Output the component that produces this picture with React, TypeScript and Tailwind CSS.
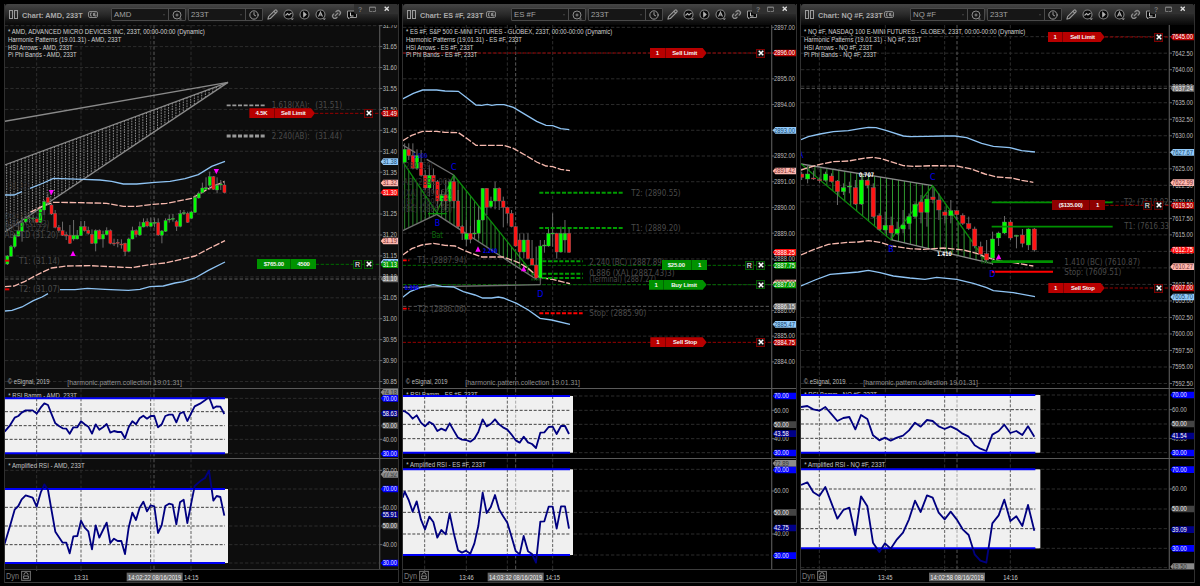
import { Pencil, Link2, Clock } from 'lucide-react';
import type { CSSProperties } from 'react';

// Plot coordinates are thirds of a CSS pixel. y = 0 of the price pane sits 165px below its top.
type Pt = [number, number];
type Candle = [number, number, number, number, number]; // high, low, top, bottom, up
type Seg = { p: Pt[]; c: string; w?: number; dash?: string };
type Label = { x: number; y: number; t: string; w?: number; c?: string; bold?: boolean; s?: number };
type Tag = { y: number; t: string; k: string };
type Order = { x: number; split: number; end: number; y: number; a: string; b: string; k: 'red' | 'green' | 'dark'; arrow?: boolean; from: number; r?: boolean };
type Study = { title: string; titleW: number; titleY: number; top: number; bottom: number; grid: number[]; pts: string; tags: Tag[] };

type Chart = {
  symbol: string;
  x0: number;
  leftW: string;
  titleW: number;
  bg: string;
  axis: number;
  labelX: number;
  legend: [string, number][];
  gridX: number[];
  cross: Pt;
  prices: Tag[];
  tags: Tag[];
  start: number;
  step: number;
  candles: Candle[];
  bands: Seg[];
  hatch: { top: Pt[]; bottom: Pt[]; step: number; c: string; dash?: string };
  under: Seg[];
  over: Seg[];
  labels: Label[];
  arrows: [number, number, number][];
  orders: Order[];
  xBox: number;
  plotEnd: number;
  studies: Study[];
  times: [number, string][];
  stamp: [number, string];
};

const BLUE = '#8fc4f4';
const PINK = '#f7b9ae';
const GREEN = '#0a8c0a';
const GRAY = '#707070';

const TAG_COLORS: Record<string, [string, string]> = {
  sky: ['#93caf9', '#17486f'],
  pink: ['#ffb9b0', '#7a3030'],
  red: ['#ff0d0d', '#ffffff'],
  order: ['#b80000', '#ffffff'],
  green: ['#009a00', '#ffffff'],
  gray: ['#707070', '#f0f0f0'],
  mid: ['#444444', '#eeeeee'],
  dim: ['#8a8a8a', '#333333'],
  blue: ['#0000ff', '#e8e8ff'],
  navy: ['#000088', '#ffffff'],
};

const P = (s: string): Pt[] => s.split(' ').map((q) => q.split(',').map(Number) as Pt);

const up = (s: string): Pt[] => P(s).map(([x, y]) => [x, y - 570]);

const scale = (first: number, y: number, dy: number, dv: number, n: number): Tag[] =>
  Array.from({ length: n }, (_, i) => ({ y: y + dy * i, t: (first + dv * i).toFixed(2), k: '' }));

const CHARTS: Chart[] = [
  {
    symbol: 'AMD',
    x0: 15,
    leftW: 'w-[106px]',
    titleW: 184,
    bg: '#0d0d0d',
    axis: 1139,
    labelX: 1148,
    legend: [
      ['* AMD, ADVANCED MICRO DEVICES INC, 233T, 00:00-00:00 (Dynamic)', 590],
      ['Harmonic Patterns (19.01.31) - AMD, 233T', 340],
      ['HSI Arrows - AMD, 233T', 194],
      ['Pi Phi Bands - AMD, 233T', 206],
    ],
    gridX: [110, 243, 452, 573],
    cross: [462, 267],
    prices: scale(31.7, -493, 62.8, -0.05, 18),
    tags: [
      { y: -230, t: '31.49', k: 'order' },
      { y: -85, t: '31.38', k: 'sky' },
      { y: -21, t: '31.32', k: 'pink' },
      { y: 7, t: '31.30', k: 'red' },
      { y: 153, t: '31.19', k: 'pink' },
      { y: 217, t: '31.13', k: 'sky' },
      { y: 224, t: '31.13', k: 'green' },
      { y: 267, t: '31.10', k: 'gray' },
    ],
    start: 22,
    step: 11.04,
    candles: [
      [195, 225, 198, 222, 1], [165, 200, 170, 199, 1], [130, 175, 136, 170, 1], [100, 140, 122, 138, 1], [80, 155, 98, 124, 1],
      [80, 100, 86, 96, 1], [75, 98, 83, 86, 1], [75, 98, 84, 87, 1], [80, 98, 85, 97, 0], [55, 98, 58, 97, 1],
      [30, 75, 35, 60, 1], [12, 45, 22, 38, 0], [40, 75, 45, 72, 0], [60, 115, 70, 112, 0], [105, 128, 112, 122, 0],
      [95, 138, 122, 136, 0], [125, 150, 134, 138, 0], [105, 162, 136, 160, 0], [90, 152, 136, 147, 1], [120, 148, 136, 147, 1],
      [93, 138, 110, 137, 1], [93, 125, 110, 122, 0], [110, 134, 121, 130, 0], [118, 162, 133, 160, 0], [118, 184, 122, 160, 1],
      [118, 148, 122, 147, 0], [122, 173, 133, 147, 1], [112, 136, 122, 134, 1], [118, 163, 122, 160, 0], [146, 168, 159, 162, 0],
      [147, 172, 157, 160, 0], [148, 176, 162, 165, 0], [158, 198, 160, 185, 0], [143, 187, 147, 184, 1], [110, 148, 122, 147, 1],
      [118, 142, 122, 134, 0], [95, 138, 110, 135, 1], [85, 112, 97, 111, 1], [85, 112, 95, 108, 0], [83, 112, 98, 109, 1],
      [85, 112, 97, 100, 1], [85, 138, 98, 135, 0], [120, 160, 123, 136, 1], [85, 126, 92, 124, 1], [73, 98, 87, 90, 1],
      [72, 95, 85, 88, 1], [90, 123, 95, 109, 0], [60, 112, 71, 109, 1], [60, 75, 68, 71, 1], [65, 99, 70, 97, 0],
      [62, 87, 66, 85, 1], [14, 69, 22, 67, 1], [5, 26, 10, 24, 1], [-22, 10, -6, 8, 1], [-38, 0, -7, -2, 1],
      [-55, 0, -40, -14, 1], [-42, 0, -40, -2, 0], [-38, 10, -14, 0, 1], [-30, 0, -18, -15, 1], [-28, 10, -15, 8, 0],
    ],
    bands: [
      { p: up('14,585 42,585 66,575'), c: BLUE },
      { p: up('90,565 130,549 160,535 250,538 300,540 335,544 370,552 410,552 465,547 510,544 555,536 595,524 635,499 675,484'), c: BLUE },
      { p: P('90,67 125,50 160,37 240,38 320,40 370,49 410,49 460,43 500,40 540,32 575,25 605,8 640,-12 673,-25'), c: PINK, dash: '20 5' },
      { p: P('14,290 42,288 75,274 120,250 155,234 200,228 270,227 330,230 395,233 455,223 495,219 540,209 585,198 630,174 675,152'), c: PINK, dash: '20 5' },
      { p: P('14,363 36,361 66,351 100,332 126,321 144,311'), c: BLUE },
      { p: P('180,299 225,299 262,295 315,298 385,301 420,298 450,290 490,288 525,279 550,275 585,264 625,241 675,216'), c: BLUE },
    ],
    hatch: { top: P('14,-75 684,-323'), bottom: P('14,126 684,-323'), step: 11.04, c: '#8a8a8a', dash: '5 3' },
    under: [
      { p: P('14,-206 684,-323'), c: '#8a8a8a' },
      { p: P('14,-75 684,-323'), c: '#8a8a8a' },
      { p: P('14,126 684,-323'), c: '#8a8a8a' },
    ],
    over: [
      { p: P('680,-254 797,-254'), c: '#999999', w: 5, dash: '12 5' },
      { p: P('680,-162 797,-162'), c: '#999999', w: 9, dash: '12 5' },
      { p: P('14,212 28,212'), c: '#dd0000', w: 6 },
      { p: P('14,298 28,298'), c: '#dd0000', w: 6 },
    ],
    labels: [
      { x: 815, y: -245, t: '1.618(XA):', w: 114 },
      { x: 946, y: -245, t: '(31.51)', w: 80 },
      { x: 815, y: -154, t: '2.240(AB):', w: 114 },
      { x: 946, y: -154, t: '(31.44)', w: 80 },
      { x: 20, y: -3, t: '(31.32)', w: 68, c: '#303030' },
      { x: 14, y: 88, t: '(XA) (31.27)', w: 122, c: '#333333' },
      { x: 14, y: 111, t: '0.886 (31.23)', w: 134, c: '#404040' },
      { x: 14, y: 122, t: '(BC) (31.22)', w: 132, c: '#3c3c3c' },
      { x: 14, y: 144, t: 'AB=CD (31.20)', w: 161 },
      { x: 57, y: 221, t: 'T1: (31.14)', w: 123 },
      { x: 57, y: 307, t: 'T2: (31.07)', w: 123 },
    ],
    arrows: [[154, 7, 0], [219, 191, 1], [649, -56, 0]],
    orders: [
      { x: 748, split: 824, end: 945, y: -230, a: '4.5K', b: 'Sell Limit', k: 'red', arrow: true, from: 945 },
      { x: 772, split: 874, end: 947, y: 223, a: '$765.00', b: '4500', k: 'green', from: 947, r: true },
    ],
    xBox: 1093,
    plotEnd: 675,
    studies: [
      {
        title: '* RSI Bamm - AMD, 233T', titleW: 206, titleY: 35, top: 37, bottom: 202, grid: [77, 119, 160],
        pts: '14,137 30,118 44,95 55,90 65,80 77,73 98,73 110,83 122,65 133,52 144,57 155,85 166,112 177,120 188,127 199,128 209,143 220,124 232,124 243,106 254,115 265,122 276,143 287,115 298,131 309,124 320,114 331,140 342,135 353,138 364,138 375,157 386,124 397,106 408,115 419,97 430,89 441,98 452,90 463,90 474,124 485,115 496,90 507,86 518,86 529,109 540,82 551,78 562,105 573,83 584,61 600,53 615,43 627,33 640,67 650,61 661,62 673,84',
        tags: [{ y: 19, t: '74.18', k: 'dim' }, { y: 160, t: '40.00', k: '' }, { y: 119, t: '50.00', k: 'mid' }, { y: 82, t: '58.63', k: 'navy' }, { y: 37, t: '70.00', k: 'blue' }, { y: 203, t: '30.00', k: 'blue' }],
      },
      {
        title: '* Amplified RSI - AMD, 233T', titleW: 229, titleY: 245, top: 309, bottom: 531, grid: [253, 364, 420, 476],
        pts: '14,473 30,420 44,371 55,360 65,340 77,328 98,335 110,362 122,320 133,295 144,312 155,375 166,437 188,470 199,470 209,502 220,451 232,450 243,404 254,425 265,436 276,490 287,418 298,455 309,432 320,410 331,471 342,458 353,465 364,465 375,504 386,425 397,380 408,402 419,365 430,347 441,376 452,358 463,361 474,441 485,418 496,360 507,353 518,356 529,415 540,349 551,341 562,411 573,355 584,300 600,286 615,276 627,254 640,344 650,330 661,333 673,389',
        tags: [{ y: 265, t: '77.92', k: 'dim' }, { y: 253, t: '80.00', k: '' }, { y: 364, t: '60.00', k: '' }, { y: 476, t: '40.00', k: '' }, { y: 420, t: '50.00', k: 'mid' }, { y: 386, t: '55.91', k: 'navy' }, { y: 309, t: '70.00', k: 'blue' }, { y: 531, t: '30.00', k: 'blue' }],
      },
    ],
    times: [[243, '13:31'], [573, '14:15']],
    stamp: [380, '14:02:22 08/16/2019'],
  },
  {
    symbol: 'ES #F',
    x0: 9,
    leftW: 'w-[108px]',
    titleW: 192,
    bg: '#000000',
    axis: 1115,
    labelX: 1122,
    legend: [
      ['* ES #F, S&P 500 E-MINI FUTURES - GLOBEX, 233T, 00:00-00:00 (Dynamic)', 619],
      ['Harmonic Patterns (19.01.31) - ES #F, 233T', 348],
      ['HSI Arrows - ES #F, 233T', 202],
      ['Pi Phi Bands - ES #F, 233T', 214],
    ],
    gridX: [74, 199, 322, 458],
    cross: [347, 349],
    prices: scale(2897, -488, 77.2, -1, 14),
    tags: [
      { y: -411, t: '2896.00', k: 'order' },
      { y: -179, t: '2893.00', k: 'sky' },
      { y: -57, t: '2891.42', k: 'pink' },
      { y: 187, t: '2888.25', k: 'red' },
      { y: 226, t: '2887.75', k: 'green' },
      { y: 279, t: '2887.08', k: 'pink' },
      { y: 285, t: '2887.00', k: 'green' },
      { y: 349, t: '2886.15', k: 'gray' },
      { y: 403, t: '2885.47', k: 'sky' },
      { y: 457, t: '2884.75', k: 'order' },
    ],
    start: 14,
    step: 12.33,
    candles: [
      [-140, -80, -122, -83, 1], [-140, -90, -122, -103, 0], [-140, -62, -103, -65, 0], [-122, -60, -103, -65, 1], [-120, -40, -83, -44, 0],
      [-60, 0, -44, -6, 0], [-75, 20, -44, -6, 1], [-65, 10, -44, -25, 0], [-30, 55, -25, 33, 0], [0, 50, 14, 33, 1],
      [-30, 60, 14, 33, 0], [-32, 36, -25, 33, 1], [-45, 55, -25, 33, 0], [0, 115, 33, 110, 0], [105, 150, 110, 130, 0],
      [90, 168, 130, 148, 1], [108, 160, 130, 148, 0], [90, 148, 129, 132, 1], [50, 145, 90, 130, 1], [-6, 92, -5, 90, 1],
      [-6, 75, -5, 52, 0], [20, 55, 33, 50, 1], [-25, 58, -5, 33, 1], [-8, 60, -5, 33, 0], [20, 112, 33, 52, 0],
      [50, 100, 52, 70, 0], [60, 112, 70, 110, 0], [108, 170, 110, 168, 0], [130, 205, 150, 186, 0], [130, 205, 150, 186, 1],
      [130, 208, 150, 206, 0], [150, 226, 206, 225, 0], [170, 268, 225, 264, 0], [150, 284, 168, 264, 1], [150, 188, 165, 168, 1],
      [112, 170, 130, 168, 1], [70, 170, 129, 132, 1], [128, 206, 130, 186, 0], [110, 188, 130, 186, 1], [90, 188, 130, 150, 1],
      [112, 188, 130, 187, 0],
    ],
    bands: [
      { p: up('8,297 40,280 68,270 110,270 135,273 175,274 200,293 228,315 245,316 262,313 275,316 290,314 312,314 340,322 375,343 410,364 438,376 458,377 482,386 508,389'), c: BLUE },
      { p: up('8,422 35,406 68,394 110,394 135,397 175,398 200,415 228,436 312,436 340,445 375,465 410,486 438,498 458,500 482,508 510,512'), c: PINK, dash: '20 5' },
      { p: P('8,195 35,176 65,165 100,160 135,166 165,168 190,180 220,192 245,201 310,201 335,210 360,220 385,236 405,252 421,263 458,268 485,275 510,281'), c: PINK, dash: '20 5' },
      { p: P('8,322 30,305 60,293 100,284 125,289 160,291 190,305 225,315 248,324 275,324 295,321 310,324 350,340 385,360 420,385 455,390 510,403'), c: BLUE },
    ],
    hatch: { top: P('8,-85 110,67 161,-45 408,262'), bottom: P('8,122 110,73 408,268'), step: 12.33, c: '#2a862a' },
    under: [
      { p: P('8,-135 46,-112'), c: GRAY },
      { p: P('80,-92 161,-45'), c: GRAY },
      { p: P('8,122 110,73 412,270'), c: GRAY },
      { p: P('8,292 421,284'), c: GRAY },
      { p: P('8,-85 110,67 161,-45 408,262'), c: GREEN, w: 4 },
      { p: P('84,71 140,71'), c: GREEN, w: 4 },
      { p: P('394,268 424,268'), c: '#0a5a0a', w: 7, dash: '4 3' },
    ],
    over: [
      { p: P('418,8 672,8'), c: '#009c00', w: 6, dash: '12 5' },
      { p: P('418,114 672,114'), c: '#009c00', w: 6, dash: '12 5' },
      { p: P('427,214 548,214'), c: '#009c00', w: 6, dash: '12 5' },
      { p: P('427,251 548,251'), c: '#009c00', w: 6, dash: '12 5' },
      { p: P('427,264 548,264'), c: '#009c00', w: 6, dash: '12 5' },
      { p: P('418,370 548,370'), c: '#ff0000', w: 6, dash: '12 5' },
      { p: P('8,211 28,211'), c: '#ff0000', w: 5, dash: '12 5' },
      { p: P('8,356 28,356'), c: '#ff0000', w: 5, dash: '12 5' },
    ],
    labels: [
      { x: 10, y: -62, t: '(2891.59)', w: 88, c: '#333333' },
      { x: 10, y: -15, t: 'AB (2891.00)', w: 140, c: '#333333' },
      { x: 10, y: 19, t: '(XA) (2890.56)', w: 146, c: '#3a3a3a' },
      { x: 10, y: 46, t: '(BC) (2890.12)', w: 146, c: '#333333' },
      { x: 10, y: 65, t: '(BC) (2889.95)', w: 146, c: '#3a3a3a' },
      { x: 694, y: 19, t: 'T2: (2890.55)', w: 148 },
      { x: 694, y: 124, t: 'T1: (2889.20)', w: 148 },
      { x: 52, y: 219, t: 'T1: (2887.94)', w: 147 },
      { x: 52, y: 366, t: 'T2: (2886.06)', w: 147 },
      { x: 568, y: 277, t: '(Terminal) (2887.27)', w: 200 },
      { x: 568, y: 224, t: '2.240 (BC) (2887.89)', w: 226 },
      { x: 568, y: 259, t: '0.886 (XA) (2887.43)3)', w: 256 },
      { x: 568, y: 378, t: 'Stop: (2885.90)', w: 171 },
      { x: 153, y: -60, t: 'C', c: '#0000f0' },
      { x: 104, y: 108, t: 'B', c: '#0000f0' },
      { x: 412, y: 321, t: 'D', c: '#0000f0' },
      { x: 95, y: 145, t: 'Bat', c: '#0a6a0a', w: 34 },
      { x: 40, y: -96, t: '1.000', c: '#0000f0', w: 42, s: 19 },
      { x: 249, y: 188, t: '2.240', c: '#0000f0', w: 43, s: 19, bold: true },
      { x: 14, y: 299, t: '0.886', c: '#0000f0', w: 43, s: 19, bold: true },
    ],
    arrows: [[234, 178, 1], [371, 237, 1]],
    orders: [
      { x: 750, split: 797, end: 920, y: -411, a: '1', b: 'Sell Limit', k: 'red', arrow: true, from: 8 },
      { x: 785, split: 876, end: 922, y: 226, a: '$25.00', b: '1', k: 'green', from: 8, r: true },
      { x: 747, split: 793, end: 920, y: 284, a: '1', b: 'Buy Limit', k: 'green', arrow: true, from: 8 },
      { x: 751, split: 799, end: 920, y: 457, a: '1', b: 'Sell Stop', k: 'red', arrow: true, from: 8 },
    ],
    xBox: 1068,
    plotEnd: 510,
    studies: [
      {
        title: '* RSI Bamm - ES #F, 233T', titleW: 214, titleY: 34, top: 30, bottom: 200, grid: [73, 115, 158],
        pts: '8,75 14,76 26,84 38,98 50,88 63,110 75,121 88,108 100,115 112,135 124,128 137,134 149,112 161,133 174,155 186,161 198,162 211,167 223,158 235,138 248,100 260,121 272,114 285,100 297,115 309,124 322,131 334,145 347,163 359,170 371,152 384,169 396,174 408,186 421,140 433,139 446,123 458,122 470,144 483,120 495,120 507,144',
        tags: [{ y: 73, t: '60.00', k: '' }, { y: 158, t: '40.00', k: '' }, { y: 116, t: '50.00', k: 'mid' }, { y: 143, t: '43.58', k: 'navy' }, { y: 30, t: '70.00', k: 'blue' }, { y: 201, t: '30.00', k: 'blue' }],
      },
      {
        title: '* Amplified RSI - ES #F, 233T', titleW: 238, titleY: 243, top: 250, bottom: 507, grid: [315, 379, 444],
        pts: '8,335 14,317 26,342 38,377 50,346 63,401 75,430 88,392 100,408 112,455 124,432 137,445 149,382 161,440 174,493 186,500 198,494 211,503 223,473 235,420 248,320 260,381 272,364 285,327 297,370 309,390 322,410 334,450 347,495 359,505 371,450 384,496 396,504 408,530 421,407 433,406 446,362 458,362 470,428 483,361 495,361 507,428',
        tags: [{ y: 232, t: '72.89', k: 'dim' }, { y: 315, t: '60.00', k: '' }, { y: 444, t: '40.00', k: '' }, { y: 379, t: '50.00', k: 'mid' }, { y: 426, t: '42.75', k: 'navy' }, { y: 252, t: '70.00', k: 'blue' }, { y: 509, t: '30.00', k: 'blue' }],
      },
    ],
    times: [[199, '13:46'], [458, '14:15']],
    stamp: [263, '14:03:32 08/16/2019'],
  },
  {
    symbol: 'NQ #F',
    x0: 3,
    leftW: 'w-[109px]',
    titleW: 196,
    bg: '#000000',
    axis: 1108,
    labelX: 1116,
    legend: [
      ['* NQ #F, NASDAQ 100 E-MINI FUTURES - GLOBEX, 233T, 00:00-00:00 (Dynamic)', 664],
      ['Harmonic Patterns (19.01.31) - NQ #F, 233T', 352],
      ['HSI Arrows - NQ #F, 233T', 206],
      ['Pi Phi Bands - NQ #F, 233T', 218],
    ],
    gridX: [58, 256, 434, 631],
    cross: [471, -305],
    prices: scale(7645, -460, 49.55, -2.5, 22),
    tags: [
      { y: -459, t: '7645.00', k: 'order' },
      { y: -305, t: '7637.24', k: 'gray' },
      { y: -113, t: '7627.67', k: 'sky' },
      { y: -22, t: '7622.99', k: 'pink' },
      { y: 46, t: '7619.50', k: 'order' },
      { y: 180, t: '7612.75', k: 'red' },
      { y: 230, t: '7610.27', k: 'pink' },
      { y: 294, t: '7607.00', k: 'order' },
      { y: 321, t: '7605.70', k: 'sky' },
    ],
    start: 5,
    step: 17.9,
    candles: [
      [-55, -30, -48, -38, 0], [-75, -20, -48, -33, 1], [-58, -30, -36, -33, 0], [-38, -20, -31, -28, 0], [-55, -25, -48, -29, 1],
      [-50, -22, -42, -25, 0], [-30, 45, -27, 5, 0], [-20, 15, -7, 5, 1], [-25, 10, -12, -9, 1], [-30, 45, -7, 42, 0],
      [-40, 45, -30, 42, 1], [-32, -5, -29, -14, 0], [-20, 84, -7, 80, 0], [70, 122, 77, 118, 0], [65, 130, 106, 120, 1],
      [80, 145, 106, 129, 0], [95, 135, 117, 130, 1], [60, 130, 105, 117, 1], [70, 118, 80, 101, 1], [38, 85, 43, 80, 1],
      [15, 100, 36, 67, 0], [15, 110, 27, 67, 1], [-10, 40, 21, 29, 0], [10, 90, 30, 60, 0], [60, 100, 66, 76, 0],
      [30, 100, 62, 77, 1], [60, 90, 62, 74, 0], [70, 105, 76, 100, 0], [80, 120, 101, 116, 0], [110, 175, 117, 168, 0],
      [155, 200, 170, 193, 0], [150, 215, 191, 210, 0], [125, 225, 147, 204, 1], [125, 168, 129, 144, 1], [78, 132, 96, 129, 1],
      [90, 150, 96, 144, 0], [135, 175, 136, 139, 1], [117, 172, 135, 160, 0], [115, 180, 117, 165, 1], [114, 185, 117, 180, 0],
    ],
    bands: [
      { p: up('3,419 25,410 60,402 100,395 145,392 180,386 205,382 228,383 260,392 310,408 330,410 380,409 430,408 465,408 500,413 545,430 580,439 630,443 665,452 705,456'), c: BLUE },
      { p: up('3,510 25,503 60,493 100,485 145,483 190,475 218,472 245,476 310,497 340,499 400,497 470,498 510,506 555,522 590,531 635,534 665,541 700,547'), c: PINK, dash: '20 5' },
      { p: P('3,195 45,177 85,163 145,157 175,156 205,152 240,157 275,168 330,176 370,178 430,174 490,180 530,190 560,202 600,213 640,218 700,228'), c: PINK, dash: '20 5' },
      { p: P('3,288 45,270 90,253 140,249 175,246 205,241 240,248 280,258 330,264 375,268 410,262 470,268 520,280 560,293 580,302 640,308 705,320'), c: BLUE },
    ],
    hatch: { top: P('3,-78 398,-13 559,215'), bottom: P('3,-78 272,149 559,217'), step: 17.9, c: '#2f9a2f' },
    under: [
      { p: P('3,-78 398,-13'), c: '#888888' },
      { p: P('272,149 577,221'), c: '#888888' },
      { p: P('3,-78 272,149 398,-13 559,215'), c: GREEN, w: 4 },
      { p: P('544,217 578,217'), c: '#0a5a0a', w: 7, dash: '4 3' },
    ],
    over: [
      { p: P('575,37 938,37'), c: '#009000', w: 5 },
      { p: P('575,110 938,110'), c: '#009000', w: 5 },
      { p: P('575,215 759,215'), c: '#009000', w: 8 },
      { p: P('575,245 759,245'), c: '#ff0000', w: 6 },
    ],
    labels: [
      { x: 972, y: 46, t: 'T2: (7618.92', w: 134 },
      { x: 973, y: 118, t: 'T1: (7616.33', w: 134 },
      { x: 793, y: 226, t: '1.410 (BC) (7610.87)', w: 227 },
      { x: 793, y: 254, t: 'Stop: (7609.51)', w: 171 },
      { x: -6, y: -97, t: 'A', c: '#0000f0' },
      { x: 390, y: -30, t: 'C', c: '#0000f0' },
      { x: 265, y: 187, t: 'B', c: '#0000f0' },
      { x: 568, y: 262, t: 'D', c: '#0000f0' },
      { x: 177, y: -38, t: '0.707', c: '#ffffff', w: 45, s: 19, bold: true },
      { x: 411, y: 197, t: '1.410', c: '#ffffff', w: 44, s: 19, bold: true },
    ],
    arrows: [[596, 201, 1]],
    orders: [
      { x: 743, split: 790, end: 914, y: -459, a: '1', b: 'Sell Limit', k: 'red', arrow: true, from: 914 },
      { x: 757, split: 870, end: 916, y: 46, a: '($135.00)', b: '1', k: 'dark', from: 916, r: true },
      { x: 745, split: 792, end: 914, y: 294, a: '1', b: 'Sell Stop', k: 'red', arrow: true, from: 914 },
    ],
    xBox: 1062,
    plotEnd: 706,
    studies: [
      {
        title: '* RSI Bamm - NQ #F, 233T', titleW: 218, titleY: 32, top: 27, bottom: 200, grid: [71, 114, 157],
        pts: '3,63 22,60 40,70 58,74 76,63 95,85 112,105 130,96 148,93 166,130 183,87 202,99 219,148 238,163 255,155 272,164 291,155 309,149 327,133 345,110 362,122 381,102 398,105 416,121 434,129 452,121 470,130 488,143 506,152 524,178 541,188 559,195 577,146 596,135 613,116 631,141 649,135 667,147 684,121 703,152',
        tags: [{ y: 71, t: '60.00', k: '' }, { y: 158, t: '40.00', k: '' }, { y: 114, t: '50.00', k: 'mid' }, { y: 150, t: '41.54', k: 'navy' }, { y: 27, t: '70.00', k: 'blue' }, { y: 201, t: '30.00', k: 'blue' }],
      },
      {
        title: '* Amplified RSI - NQ #F, 233T', titleW: 243, titleY: 243, top: 250, bottom: 487, grid: [309, 369, 428, 545],
        pts: '3,297 22,289 40,319 58,330 76,303 95,353 112,398 130,372 148,365 166,447 183,331 202,361 219,470 238,498 255,472 272,488 291,460 309,440 327,400 345,344 362,378 381,328 398,335 416,380 434,400 452,377 470,400 488,430 506,447 524,505 541,524 559,530 577,412 596,388 613,341 631,405 649,391 667,420 684,357 703,434',
        tags: [{ y: 309, t: '60.00', k: '' }, { y: 369, t: '50.00', k: 'mid' }, { y: 431, t: '39.09', k: 'navy' }, { y: 251, t: '70.00', k: 'blue' }, { y: 487, t: '30.00', k: 'blue' }, { y: 542, t: '19.50', k: 'dim' }],
      },
    ],
    times: [[255, '13:45'], [631, '14:16']],
    stamp: [387, '14:02:58 08/16/2019'],
  },
];

const W = 1179;

function yAt(line: Pt[], x: number) {
  for (let i = 1; i < line.length; i++) {
    const [x1, y1] = line[i - 1];
    const [x2, y2] = line[i];
    if (x <= x2) return y1 + ((y2 - y1) * (x - x1)) / (x2 - x1);
  }
  return line[line.length - 1][1];
}

function Poly({ s }: { s: Seg }) {
  return (
    <polyline points={s.p.map((q) => q.join(',')).join(' ')} fill="none" stroke={s.c} strokeWidth={s.w ?? 4} strokeDasharray={s.dash} />
  );
}

function Txt({ x, y, w, t, c = '#bdbdbd', s = 20.5 }: { x: number; y: number; w?: number; t: string; c?: string; s?: number }) {
  return (
    <text x={x} y={y} fill={c} fontSize={s} textLength={w} lengthAdjust="spacingAndGlyphs">
      {t}
    </text>
  );
}

function Axis({ chart, prices, tags }: { chart: Chart; prices: Tag[]; tags: Tag[] }) {
  const { axis, labelX, x0, bg } = chart;
  const right = x0 + W;
  return (
    <g>
      <rect x={axis} y={-600} width={right - axis} height={1300} fill={bg} />
      <line x1={axis} x2={axis} y1={-600} y2={700} stroke="#4c4c4c" strokeWidth={4} />
      {[...prices, ...tags].map((p, i) => {
        const col = TAG_COLORS[p.k];
        const w = p.t.length > 5 ? 63 : labelX === 1148 ? 43 : 44;
        return (
          <g key={i}>
            {col ? (
              <path d={`M${axis + 3} ${p.y} l8 -10 H${right} v20 H${axis + 11} z`} fill={col[0]} />
            ) : (
              <line x1={axis} x2={axis + 8} y1={p.y} y2={p.y} stroke="#666" strokeWidth={3} />
            )}
            <Txt x={labelX} y={p.y + 7} w={w} t={p.t} c={col ? col[1] : '#bcbcbc'} />
          </g>
        );
      })}
    </g>
  );
}

function PricePane({ chart }: { chart: Chart }) {
  const { x0, axis, gridX, cross, candles, start, step, hatch } = chart;
  const first = hatch.top[0][0];
  const last = hatch.top[hatch.top.length - 1][0];
  const bars = Array.from({ length: Math.floor((last - first) / hatch.step) }, (_, i) => first + 6 + i * hatch.step).filter((x) => x < last);
  const offset = x0 + 9;
  const body = Math.min(step * 0.84, 13);
  return (
    <div className="relative h-[363px] overflow-hidden">
      <svg className="block h-full w-full" viewBox={`${x0} -495 ${W} 1089`} preserveAspectRatio="none">
        <g stroke="#2c2c2c" strokeWidth={3} strokeDasharray="10 6">
          {gridX.map((x) => <line key={x} x1={x} x2={x} y1={-495} y2={594} />)}
          {chart.prices.map((p) => <line key={p.y} x1={x0} x2={axis} y1={p.y} y2={p.y} />)}
        </g>
        <g stroke="#5a5a5a" strokeWidth={3} strokeDasharray="10 6">
          <line x1={cross[0]} x2={cross[0]} y1={-495} y2={594} />
          <line x1={x0} x2={axis} y1={cross[1]} y2={cross[1]} />
        </g>
        {chart.orders.map((o) => (
          <line key={o.y} x1={o.from} x2={axis + 6} y1={o.y} y2={o.y} stroke={o.k === 'green' ? '#006a00' : '#960000'} strokeWidth={3} strokeDasharray="10 5" />
        ))}
        <g stroke={hatch.c} strokeWidth={3} strokeDasharray={hatch.dash}>
          {bars.map((x) => <line key={x} x1={x} x2={x} y1={yAt(hatch.top, x)} y2={yAt(hatch.bottom, x)} />)}
        </g>
        {chart.under.map((s, i) => <Poly key={i} s={s} />)}
        {chart.bands.map((s, i) => <Poly key={i} s={s} />)}
        {candles.map(([hi, lo, top, bot, isUp], i) => {
          const x = start + i * step;
          return (
            <g key={i}>
              <line x1={x} x2={x} y1={hi} y2={lo} stroke="#6c6c6c" strokeWidth={3} />
              <rect x={x - body / 2} y={top} width={body} height={bot - top} fill={isUp ? '#00ff00' : '#ff1414'} stroke="#707070" strokeWidth={1.2} />
            </g>
          );
        })}
        {chart.over.map((s, i) => <Poly key={i} s={s} />)}
        {chart.arrows.map(([x, y, isUp]) => (
          <path key={x} d={isUp ? `M${x} ${y - 9} l8 16 h-16 z` : `M${x} ${y + 9} l-8 -16 h16 z`} fill="#ff00ff" />
        ))}
        <g fontFamily="'DejaVu Sans', sans-serif">
          {chart.labels.map((l, i) => (
            <text key={i} x={l.x} y={l.y} fill={l.c ?? '#4a4a4a'} fontSize={l.s ?? 24} fontWeight={l.bold ? 700 : 400} textLength={l.w} lengthAdjust="spacingAndGlyphs">
              {l.t}
            </text>
          ))}
        </g>
        {chart.legend.map(([t, w], i) => <Txt key={t} x={offset} y={-467 + i * 22.8} w={w} t={t} c="#d2d2d2" s={21} />)}
        <Txt x={offset - 1} y={583} w={126} t="© eSignal, 2019" />
        <Txt x={x0 + 187} y={585} w={344} t="[harmonic.pattern.collection 19.01.31]" c="#909090" s={24} />
        <Axis chart={chart} prices={chart.prices} tags={chart.tags} />
      </svg>
      {chart.orders.map((o) => <OrderTag key={o.y} o={o} x0={x0} xBox={chart.xBox} />)}
    </div>
  );
}

const ORDER_BG = { red: 'bg-[#b80000]', green: 'bg-[#009200]', dark: 'bg-[#8e0000]' };
const BOX_BORDER = { red: 'border-[#7c0000]', green: 'border-[#005c00]', dark: 'border-[#5c0000]' };

function OrderTag({ o, x0, xBox }: { o: Order; x0: number; xBox: number }) {
  const top = (o.y + 495) / 3 - 5;
  const px = (v: number) => (v - x0) / 3;
  const tag: CSSProperties = {
    left: px(o.x),
    top,
    width: (o.end - o.x) / 3,
    clipPath: o.arrow ? 'polygon(0 0, calc(100% - 4px) 0, 100% 50%, calc(100% - 4px) 100%, 0 100%)' : undefined,
  };
  const box = `absolute flex h-[9px] w-[9px] items-center justify-center border bg-[#111] text-[7px] leading-none text-white ${BOX_BORDER[o.k]}`;
  return (
    <>
      <div className={`absolute flex h-[10px] items-center text-[6px] font-bold leading-none tracking-[-0.2px] text-[#f4f4f4] ${ORDER_BG[o.k]}`} style={tag}>
        <span className="flex h-full items-center justify-center border-r border-black/30" style={{ width: (o.split - o.x) / 3 }}>{o.a}</span>
        <span className={`flex-1 whitespace-nowrap text-center ${o.arrow ? 'pr-[3px]' : ''}`}>{o.b}</span>
      </div>
      {o.r && <div className={box} style={{ left: px(xBox - 34), top: top + 0.5 }}>R</div>}
      <div className={box} style={{ left: px(xBox), top: top + 0.5 }}>
        <svg viewBox="0 0 8 8" className="h-[6px] w-[6px]" stroke="#fff" strokeWidth="2"><path d="M1 1l6 6M7 1l-6 6" /></svg>
      </div>
    </>
  );
}

function StudyPane({ chart, study, top, h, height }: { chart: Chart; study: Study; top: number; h: number; height: string }) {
  const { x0, axis, gridX, cross, plotEnd } = chart;
  const boxH = study.bottom - study.top;
  return (
    <div className={`${height} overflow-hidden border-t border-[#5a5a5a]`}>
      <svg className="block h-full w-full" viewBox={`${x0} ${top} ${W} ${h}`} preserveAspectRatio="none">
        <g stroke="#2c2c2c" strokeWidth={3} strokeDasharray="10 6">
          {gridX.map((x) => <line key={x} x1={x} x2={x} y1={top} y2={top + h} />)}
          {[study.top, ...study.grid, study.bottom].map((y) => <line key={y} x1={x0} x2={axis} y1={y} y2={y} />)}
          <line x1={cross[0]} x2={cross[0]} y1={top} y2={top + h} stroke="#555" />
        </g>
        <Txt x={x0 + 10} y={study.titleY} w={study.titleW} t={study.title} c="#c4c4c4" s={21} />
        <rect x={x0} y={study.top} width={plotEnd + (x0 === 3 ? 15 : 9) - x0} height={boxH} fill="#f0f0f0" />
        <g strokeWidth={3} strokeDasharray="9 5">
          {gridX.map((x) => <line key={x} x1={x} x2={x} y1={study.top} y2={study.bottom} stroke="#606060" />)}
          <line x1={cross[0]} x2={cross[0]} y1={study.top} y2={study.bottom} stroke="#aaaaaa" />
          {study.grid.filter((y) => y > study.top && y < study.bottom).map((y) => (
            <line key={y} x1={x0} x2={plotEnd} y1={y} y2={y} stroke="#404040" />
          ))}
        </g>
        <line x1={x0} x2={plotEnd} y1={study.top} y2={study.top} stroke="#0000f5" strokeWidth={6} />
        <line x1={x0} x2={plotEnd} y1={study.bottom} y2={study.bottom} stroke="#0000f5" strokeWidth={6} />
        <polyline points={study.pts} fill="none" stroke="#000080" strokeWidth={5.5} strokeLinejoin="round" />
        <Axis chart={chart} prices={[]} tags={study.tags} />
      </svg>
    </div>
  );
}

function TimeAxis({ chart }: { chart: Chart }) {
  const { x0, stamp } = chart;
  return (
    <div className="h-[14px] border-y border-[#3c3c3c] bg-black">
      <svg className="block h-full w-full" viewBox={`${x0} 553 ${W} 36`} preserveAspectRatio="none">
        <Txt x={x0 + 3} y={580} w={39} t="Dyn" c="#7c7c7c" s={25} />
        <rect x={x0 + 50} y={557} width={26} height={27} fill="none" stroke="#777" strokeWidth={3} />
        <path d={`M${x0 + 57} 569 v-3 a6 5 0 0 1 12 0 v3 M${x0 + 56} 571 h14 v8 h-14 z`} fill="none" stroke="#888" strokeWidth={3} />
        {chart.gridX.map((x) => <line key={x} x1={x} x2={x} y1={550} y2={556} stroke="#555" strokeWidth={3} />)}
        {chart.times.map(([x, t]) => <Txt key={t} x={x - 21} y={582} w={43} t={t} c="#cccccc" />)}
        <rect x={stamp[0]} y={561} width={168} height={26} fill="#686868" />
        <Txt x={stamp[0] + 4} y={582} w={160} t={stamp[1]} c="#f2f2f2" />
      </svg>
    </div>
  );
}

function Combo({ value, icon }: { value: string; icon: 'target' | 'clock' }) {
  return (
    <div className="flex h-[13px] w-[75px] shrink-0 items-center rounded-[1px] border border-[#4a4a4a] bg-[#161616]">
      <span className="flex-1 pl-[2px] text-[7.8px] leading-none text-[#a2a2a2]">{value}</span>
      <span className="mr-[3px] h-0 w-0 border-x-[1.5px] border-t-2 border-x-transparent border-t-[#444]" />
      <span className="flex h-full w-[17px] items-center justify-center border-l border-[#4a4a4a]">
        {icon === 'clock' ? (
          <Clock className="h-[10px] w-[10px] text-[#9a9a9a]" strokeWidth={2.4} />
        ) : (
          <svg viewBox="0 0 20 20" className="h-[10px] w-[10px]" fill="none" stroke="#8c8c8c" strokeWidth="2">
            <circle cx="10" cy="10" r="8" />
            <path d="M10 7v6M7 10h6M15 18h4" />
          </svg>
        )}
      </span>
    </div>
  );
}

function RoundIcon({ d, fill, menu = true }: { d: string; fill?: boolean; menu?: boolean }) {
  return (
    <svg viewBox="0 0 22 22" className="h-[11px] w-[11px] shrink-0" fill="none" stroke="#858585" strokeWidth="2.2">
      <circle cx="11" cy="11" r="9" fill="#080808" />
      <path d={d} fill={fill ? '#b8b8b8' : 'none'} stroke="#b0b0b0" />
      {menu && <path d="M15 19h7l-3.5 3z" fill="#aaa" stroke="none" />}
    </svg>
  );
}

function Header({ chart }: { chart: Chart }) {
  return (
    <div className="relative flex h-[21px] items-center overflow-hidden rounded-t-[3px] bg-gradient-to-b from-[#454545] via-[#292929] to-[#080808]">
      <div className={`flex shrink-0 items-center pl-[4px] ${chart.leftW}`}>
        <span className="h-[9px] w-[4px] border border-[#999]" />
        <span className="ml-px h-[9px] w-[4px] border border-[#999]" />
        <svg className="ml-[4px] h-[10px] w-[65px]" viewBox="0 0 195 30" preserveAspectRatio="none">
          <text x="0" y="23" fontSize="24" fontWeight="700" fill="#a9a9a9" textLength={chart.titleW - 2} lengthAdjust="spacingAndGlyphs">
            Chart: {chart.symbol}, 233T
          </text>
        </svg>
        <svg className="ml-px h-[7px] w-[10px] shrink-0" viewBox="0 0 20 14" fill="none" stroke="#888" strokeWidth="2">
          <rect x="1" y="1" width="18" height="12" rx="3" />
          <path d="M8 4H5v6h3M11 4v6M15 4h-2v6h3V7" />
        </svg>
      </div>
      <Combo value={chart.symbol} icon="target" />
      <div className="ml-[2px] flex">
        <Combo value="233T" icon="clock" />
      </div>
      <div className="ml-[4px] flex items-center gap-[5px]">
        <Pencil className="h-[11px] w-[11px] shrink-0 text-[#9a9a9a]" strokeWidth={2.4} />
        <RoundIcon d="M5 13l4-4 3 3 5-4" />
        <RoundIcon d="M9.5 7l4.5 4-4.5 4z" fill menu={false} />
        <RoundIcon d="M7 15l4-9 4 9M8 12h6" />
        <Link2 className="h-[11px] w-[11px] shrink-0 -rotate-45 text-[#8c8c8c]" strokeWidth={2.8} />
        <svg viewBox="0 0 20 20" className="h-[10px] w-[10px] shrink-0" fill="none" stroke="#999" strokeWidth="2">
          <path d="M1 2h18v13H6l-3 3v-3H1z" fill="#080808" />
          <path d="M7 5v7h6" stroke="#ccc" />
        </svg>
      </div>
      <div className="absolute right-0 top-0 flex h-[10px] w-[44px] items-center justify-between rounded-bl-[2px] bg-[#303030] pl-[4px] pr-[9px]">
        <span className="text-[7px] font-bold leading-none text-[#777]">?</span>
        <svg viewBox="0 0 14 12" className="h-[6px] w-[7px]" fill="none" stroke="#777" strokeWidth="2">
          <path d="M13 6V2H1v9h6M1 3h12M8 11h5V7" />
        </svg>
        <svg viewBox="0 0 8 8" className="h-[5.5px] w-[5.5px]" stroke="#ddd" strokeWidth="2"><path d="M1 1l6 6M7 1l-6 6" /></svg>
      </div>
    </div>
  );
}

export default function App() {
  return (
    <div className="flex h-[586px] w-[1200px] gap-[3px] overflow-hidden bg-black pl-[4px] pt-[4px] font-['Liberation_Sans',Arial,sans-serif]">
      {CHARTS.map((chart) => (
        <section key={chart.symbol} className="flex h-[579px] w-[395px] shrink-0 flex-col border-x border-[#303030]" style={{ backgroundColor: chart.bg }}>
          <Header chart={chart} />
          <PricePane chart={chart} />
          <StudyPane chart={chart} study={chart.studies[0]} top={9} h={207} height="h-[70px]" />
          <StudyPane chart={chart} study={chart.studies[1]} top={219} h={330} height="h-[111px]" />
          <TimeAxis chart={chart} />
        </section>
      ))}
    </div>
  );
}
